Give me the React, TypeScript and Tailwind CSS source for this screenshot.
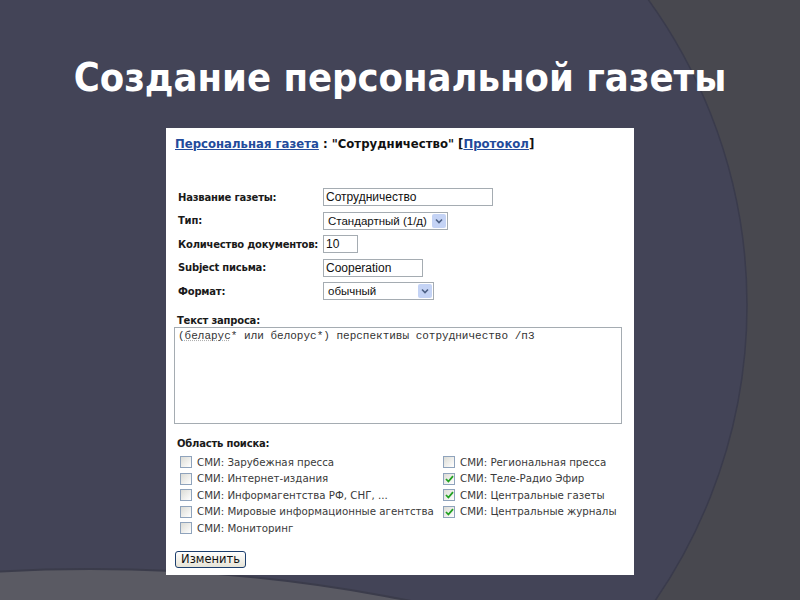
import React from "react";

// Slide: "Создание персональной газеты" with a screenshot of the newspaper form

const V = "font-['Verdana','DejaVu_Sans',sans-serif]";
const A = "font-['Liberation_Sans','Arial',sans-serif]";

function SlideBackground() {
  return (
    <svg className="absolute inset-0" width="800" height="600" viewBox="0 0 800 600">
      <defs>
        <clipPath id="band">
          <circle cx="90" cy="2196" r="1627" />
        </clipPath>
      </defs>
      <rect width="800" height="600" fill="#48484f" />
      <circle cx="226" cy="305" r="521" fill="#434457" />
      <circle cx="90" cy="2196" r="1627" fill="#4e4e53" />
      <circle cx="226" cy="305" r="521" fill="#5a5a63" clipPath="url(#band)" />
      <circle cx="226" cy="305" r="521" fill="none" stroke="#3a3b4c" strokeWidth="1.5" />
      <circle cx="226" cy="305" r="521" fill="none" stroke="#63636b" strokeWidth="1.2" clipPath="url(#band)" />
      <circle cx="90" cy="2196" r="1627" fill="none" stroke="#3b3c4b" strokeWidth="2" />
    </svg>
  );
}

function TextBox({ value, width }: { value: string; width: number }) {
  return (
    <div
      className={`h-[18px] shrink-0 border border-[#a5acb2] bg-white pl-[2px] text-[12px] leading-[16px] whitespace-nowrap text-[#111] ${A}`}
      style={{ width }}
    >
      {value}
    </div>
  );
}

function SelectBox({ value, width }: { value: string; width: number }) {
  return (
    <div
      className={`flex h-[18px] shrink-0 items-center justify-between border border-[#a5acb2] bg-white pl-[4px] pr-[1px] text-[11.5px] whitespace-nowrap text-[#111] ${A}`}
      style={{ width }}
    >
      <span className="leading-[16px]">{value}</span>
      <span className="flex h-[14px] w-[14px] items-center justify-center rounded-[2px] bg-[#c4d3f5]">
        <svg width="8" height="6" viewBox="0 0 8 6">
          <path d="M1 1.5 L4 4.5 L7 1.5" fill="none" stroke="#4d6185" strokeWidth="1.6" />
        </svg>
      </span>
    </div>
  );
}

function Check({ on, label }: { on?: boolean; label: string }) {
  return (
    <div className="flex h-[16.5px] items-center">
      <span className="flex h-[12px] w-[12px] shrink-0 items-center justify-center border border-[#8fa3bc] bg-linear-to-br from-[#dcdcd6] to-white">
        {on && (
          <svg width="9" height="8" viewBox="0 0 9 8">
            <path d="M1 4 L3.4 6.5 L8 1.2" fill="none" stroke="#21a121" strokeWidth="1.8" />
          </svg>
        )}
      </span>
      <span className={`ml-[5px] text-[10.25px] text-[#3a3a3a] whitespace-nowrap ${V}`}>{label}</span>
    </div>
  );
}

const FIELDS: { label: string; kind: "text" | "select"; value: string; width: number }[] = [
  { label: "Название газеты:", kind: "text", value: "Сотрудничество", width: 170 },
  { label: "Тип:", kind: "select", value: "Стандартный (1/д)", width: 125 },
  { label: "Количество документов:", kind: "text", value: "10", width: 35 },
  { label: "Subject письма:", kind: "text", value: "Cooperation", width: 100 },
  { label: "Формат:", kind: "select", value: "обычный", width: 111 },
];

const LEFT = [
  "СМИ: Зарубежная пресса",
  "СМИ: Интернет-издания",
  "СМИ: Информагентства РФ, СНГ, ...",
  "СМИ: Мировые информационные агентства",
  "СМИ: Мониторинг",
];

const RIGHT = [
  { label: "СМИ: Региональная пресса", on: false },
  { label: "СМИ: Теле-Радио Эфир", on: true },
  { label: "СМИ: Центральные газеты", on: true },
  { label: "СМИ: Центральные журналы", on: true },
];

export default function App() {
  return (
    <div className="relative h-[600px] w-[800px] overflow-hidden">
      <SlideBackground />

      <div className="relative flex h-[128px] justify-center pt-[55px]">
        <h1 className="font-['DejaVu_Sans_Condensed','DejaVu_Sans',sans-serif] text-[39.5px] font-bold leading-[44px] text-white">
          Создание персональной газеты
        </h1>
      </div>

      {/* form screenshot */}
      <div className="relative ml-[166px] h-[447px] w-[468px] bg-white">
        <div className={`pl-[9px] pt-[9px] text-[11.7px] font-bold leading-[14px] whitespace-nowrap text-[#111] ${V}`}>
          <span className="text-[#234b9b] underline">Персональная газета</span> : "Сотрудничество" [
          <span className="text-[#234b9b] underline">Протокол</span>]
        </div>

        <div className="mt-[37px] flex flex-col gap-[5.5px] pl-[12px]">
          {FIELDS.map((f) => (
            <div key={f.label} className="flex items-center">
              <span
                className={`w-[145px] shrink-0 text-[10px] font-bold tracking-[-0.2px] whitespace-nowrap text-[#1a1a1a] ${V}`}
              >
                {f.label}
              </span>
              {f.kind === "text" ? (
                <TextBox value={f.value} width={f.width} />
              ) : (
                <SelectBox value={f.value} width={f.width} />
              )}
            </div>
          ))}
        </div>

        <div className={`mt-[14px] pl-[11px] text-[10px] font-bold tracking-[-0.2px] leading-[13px] text-[#1a1a1a] ${V}`}>
          Текст запроса:
        </div>
        <div className="ml-[8px] h-[97px] w-[448px] border border-[#a5acb2] px-[3px] pt-[1px] font-['Liberation_Mono','Courier_New',monospace] text-[11px] leading-[14px] text-[#333]">
          (<span className="underline decoration-dotted decoration-[#b0b0b0]">беларус</span>* или белорус*) перспективы
          сотрудничество /п3
        </div>

        <div className={`mt-[13px] pl-[11px] text-[10px] font-bold tracking-[-0.2px] leading-[14px] text-[#1a1a1a] ${V}`}>
          Область поиска:
        </div>

        <div className="mt-[3px] flex pl-[14px]">
          <div className="flex w-[263px] shrink-0 flex-col">
            {LEFT.map((l) => (
              <Check key={l} label={l} />
            ))}
          </div>
          <div className="flex flex-col">
            {RIGHT.map((c) => (
              <Check key={c.label} label={c.label} on={c.on} />
            ))}
          </div>
        </div>

        <div className="mt-[14px] flex pl-[9px]">
          <button
            className={`h-[17px] w-[71px] rounded-[3px] border border-[#1d3f6e] bg-linear-to-b from-white to-[#e6e3d6] text-[11.5px] leading-[14px] text-[#111] ${V}`}
          >
            Изменить
          </button>
        </div>
      </div>
    </div>
  );
}
